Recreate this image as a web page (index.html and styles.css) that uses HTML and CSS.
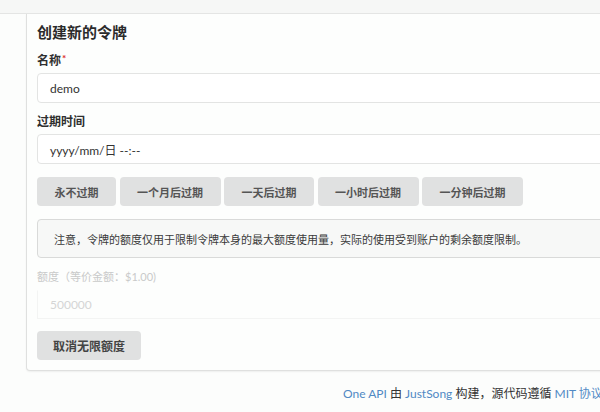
FILE: index.html
```html
<!DOCTYPE html>
<html lang="zh">
<head>
<meta charset="utf-8">
<link rel="stylesheet" href="styles.css">
</head>
<body>
<div class="topbar"></div>
<main class="page">
  <section class="card">
    <h2 class="title">创建新的令牌</h2>
    <div class="field">
      <label class="label">名称<span class="req">*</span></label>
      <div class="input"><span>demo</span></div>
    </div>
    <div class="field">
      <label class="label">过期时间</label>
      <div class="input"><span>yyyy/mm/日 --:--</span></div>
    </div>
    <div class="btnrow">
      <button class="btn">永不过期</button>
      <button class="btn">一个月后过期</button>
      <button class="btn">一天后过期</button>
      <button class="btn">一小时后过期</button>
      <button class="btn">一分钟后过期</button>
    </div>
    <div class="notice">注意，令牌的额度仅用于限制令牌本身的最大额度使用量，实际的使用受到账户的剩余额度限制。</div>
    <div class="field disabled">
      <label class="label light">额度（等价金额：$1.00)</label>
      <div class="input faded"><span>500000</span></div>
    </div>
    <button class="btn big">取消无限额度</button>
  </section>
  <footer class="footer"><a>One API</a> 由 <a>JustSong</a> 构建，源代码遵循 <a>MIT 协议</a></footer>
</main>
</body>
</html>
```
FILE: styles.css
```css
*, *::before, *::after {
  box-sizing: border-box;
}
html, body {
  margin: 0;
  padding: 0;
  background: #fcfdfc;
  overflow: hidden;
  font-family: Lato, "Noto Sans CJK SC", sans-serif;
  color: #333;
}
.topbar {
  height: 14px;
  background: #f6f7f6;
  border-bottom: 1px solid #e4e5e4;
}
.page {
  padding-left: 26px;
  width: 720px;
}
.card {
  border: 1px solid #dfe0df;
  border-top: none;
  border-radius: 0 0 4px 4px;
  background: #fdfefd;
  padding: 8px 11px 10px 10px;
  box-shadow: 0 1px 2px rgba(0,0,0,0.06);
}
.title {
  margin: 0;
  font-size: 15px;
  line-height: 20px;
  font-weight: 700;
  color: #2b2b2b;
}
.field {
  margin-top: 12px;
}
.label {
  display: block;
  font-size: 12px;
  line-height: 14px;
  font-weight: 700;
  color: #2f2f2f;
  margin-bottom: 5px;
}
.req {
  color: #db2828;
  font-size: 10px;
  vertical-align: top;
  margin-left: 1px;
  position: relative;
  top: -3px;
}
.input {
  height: 30px;
  border: 1px solid #e3e4e3;
  border-radius: 4px;
  background: #fff;
  display: flex;
  align-items: center;
  padding-left: 12px;
  font-size: 12px;
  color: #333;
}
.btnrow {
  display: flex;
  gap: 3.5px;
  margin-top: 13px;
}
.btn {
  font-family: inherit;
  border: none;
  background: #e0e1e1;
  color: #555;
  border-radius: 4px;
  height: 29px;
  padding: 0 17.5px;
  font-size: 11px;
  font-weight: 700;
}
.notice {
  margin-top: 13px;
  height: 39px;
  border: 1px solid #d9dad9;
  border-radius: 4px;
  background: #f7f8f7;
  display: flex;
  align-items: center;
  padding-left: 16px;
  font-size: 11px;
  color: #3a3a3a;
}
.disabled {
  margin-top: 12px;
}
.label.light {
  font-weight: 400;
  color: #c9caca;
  font-size: 11px;
  margin-bottom: 6px;
}
.input.faded {
  border-color: #f3f4f3;
  border-top-color: transparent;
  border-right-color: transparent;
  background: transparent;
  color: #d4d5d5;
  height: 29px;
  border-radius: 0;
}
.btn.big {
  margin-top: 12px;
  color: #444;
  font-size: 12px;
  padding: 0 16px;
}
.footer {
  margin-top: 15px;
  padding-left: 317px;
  font-size: 12px;
  line-height: 16px;
  color: #333;
  white-space: nowrap;
}
.footer a {
  color: #5089c4;
}
```
